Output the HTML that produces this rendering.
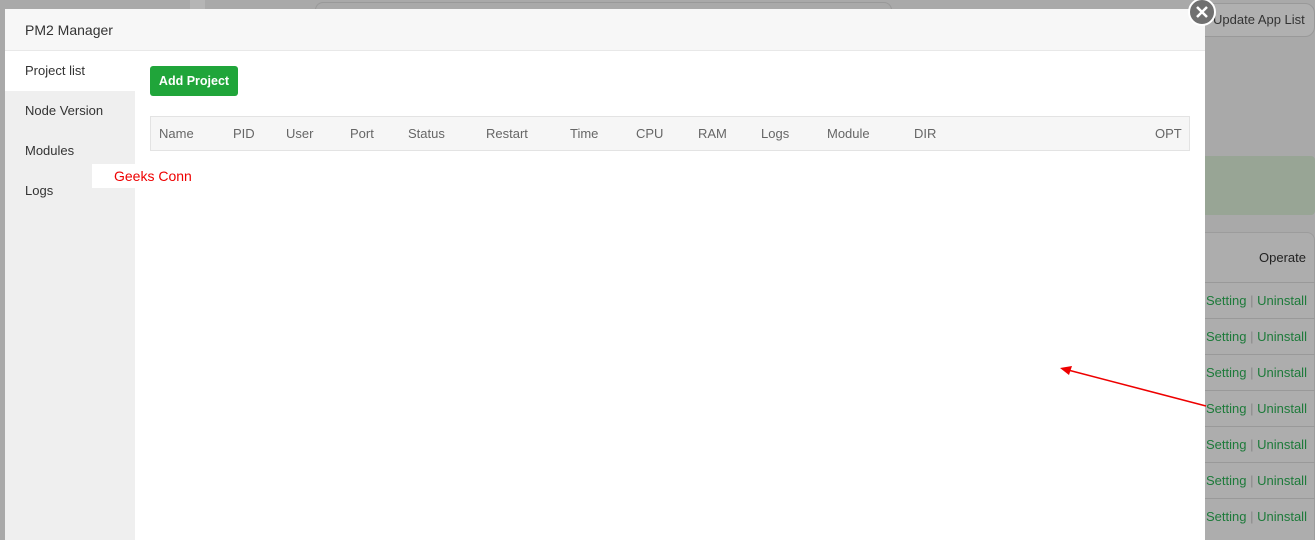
<!DOCTYPE html>
<html style="margin:0;width:1315px;height:540px;overflow:hidden;background:#a9a9a9"><head><style>
body{margin:0;width:1315px;height:540px;overflow:hidden;background:#a9a9a9;font-family:"Liberation Sans",sans-serif;position:relative}
.abs{position:absolute}
.modal{left:5px;top:9px;width:1200px;height:531px;background:#fff;overflow:hidden}
.hdr{left:0;top:0;width:1200px;height:41px;background:#f7f7f7;border-bottom:1px solid #e8e8e8;font-size:14px;color:#333;line-height:42px;text-indent:20px}
.side{left:0;top:42px;width:130px;height:490px;background:#efefef}
.side div{height:40px;line-height:40px;padding-left:20px;font-size:13px;color:#333}
.th{position:absolute;top:0;line-height:33px;font-size:13px;color:#666}
.set{font-size:13px;color:#1d7a3a}
</style></head><body>
<div class="abs" style="left:190px;top:0;width:15px;height:9px;background:#b5b5b5"></div>
<div class="abs" style="left:315px;top:2px;width:575px;height:7px;border:1px solid #999;border-bottom:none;border-radius:8px 8px 0 0"></div>
<div class="abs" style="left:1190px;top:3px;width:123px;height:32px;border:1px solid #999;border-radius:10px;background:#b0b0b0;font-size:13px;color:#333;line-height:32px;text-indent:22px">Update App List</div>
<div class="abs" style="left:1200px;top:156px;width:115px;height:59px;background:#98a595;border-radius:4px"></div>
<div class="abs" style="left:1195px;top:232px;width:118px;height:320px;border:1px solid #9c9c9c;border-radius:8px;background:#adadad"></div>
<div class="abs" style="left:1259px;top:250px;font-size:13px;color:#222">Operate</div>
<div class="abs" style="left:1205px;top:282px;width:110px;height:1px;background:#999"></div>
<div class="abs" style="left:1205px;top:318px;width:110px;height:1px;background:#999"></div>
<div class="abs" style="left:1205px;top:354px;width:110px;height:1px;background:#999"></div>
<div class="abs" style="left:1205px;top:390px;width:110px;height:1px;background:#999"></div>
<div class="abs" style="left:1205px;top:426px;width:110px;height:1px;background:#999"></div>
<div class="abs" style="left:1205px;top:462px;width:110px;height:1px;background:#999"></div>
<div class="abs" style="left:1205px;top:498px;width:110px;height:1px;background:#999"></div>
<div class="abs set" style="left:1206px;top:293px">Setting <span style="color:#888">|</span> Uninstall</div>
<div class="abs set" style="left:1206px;top:329px">Setting <span style="color:#888">|</span> Uninstall</div>
<div class="abs set" style="left:1206px;top:365px">Setting <span style="color:#888">|</span> Uninstall</div>
<div class="abs set" style="left:1206px;top:401px">Setting <span style="color:#888">|</span> Uninstall</div>
<div class="abs set" style="left:1206px;top:437px">Setting <span style="color:#888">|</span> Uninstall</div>
<div class="abs set" style="left:1206px;top:473px">Setting <span style="color:#888">|</span> Uninstall</div>
<div class="abs set" style="left:1206px;top:509px">Setting <span style="color:#888">|</span> Uninstall</div>

<div class="abs modal">
<div class="abs hdr">PM2 Manager</div>
<div class="abs side">
<div style="background:#fff">Project list</div><div>Node Version</div><div>Modules</div><div>Logs</div>
</div>
<div class="abs" style="left:145px;top:57px;width:88px;height:30px;background:#20a53a;border-radius:3px;color:#fff;font-size:12.5px;font-weight:bold;line-height:30px;text-align:center">Add Project</div>
<div class="abs" style="left:145px;top:107px;width:1038px;height:33px;background:#f6f6f6;border:1px solid #e3e3e3">
<span class="th" style="left:8px">Name</span><span class="th" style="left:82px">PID</span><span class="th" style="left:135px">User</span><span class="th" style="left:199px">Port</span><span class="th" style="left:257px">Status</span><span class="th" style="left:335px">Restart</span><span class="th" style="left:419px">Time</span><span class="th" style="left:485px">CPU</span><span class="th" style="left:547px">RAM</span><span class="th" style="left:610px">Logs</span><span class="th" style="left:676px">Module</span><span class="th" style="left:763px">DIR</span><span class="th" style="left:1004px">OPT</span>
</div>
</div>
<div class="abs" style="left:92px;top:164px;width:43px;height:24px;background:#fff"></div>
<div class="abs" style="left:114px;top:168px;font-size:14px;color:#e00">Geeks Conn</div>
<div class="abs" style="left:1188px;top:-2px;width:28px;height:28px;border-radius:50%;background:#707070;border:2px solid #fff;box-sizing:border-box"></div>
<svg class="abs" style="left:1188px;top:-2px" width="28" height="28"><path d="M9 9L19 19M19 9L9 19" stroke="#fff" stroke-width="2.5"/></svg>
<svg class="abs" style="left:0;top:0" width="1315" height="540"><line x1="1206" y1="406" x2="1068" y2="370" stroke="#e00" stroke-width="1.5"/><path d="M1060 368L1072 366L1069 375Z" fill="#e00"/></svg>
</body></html>
